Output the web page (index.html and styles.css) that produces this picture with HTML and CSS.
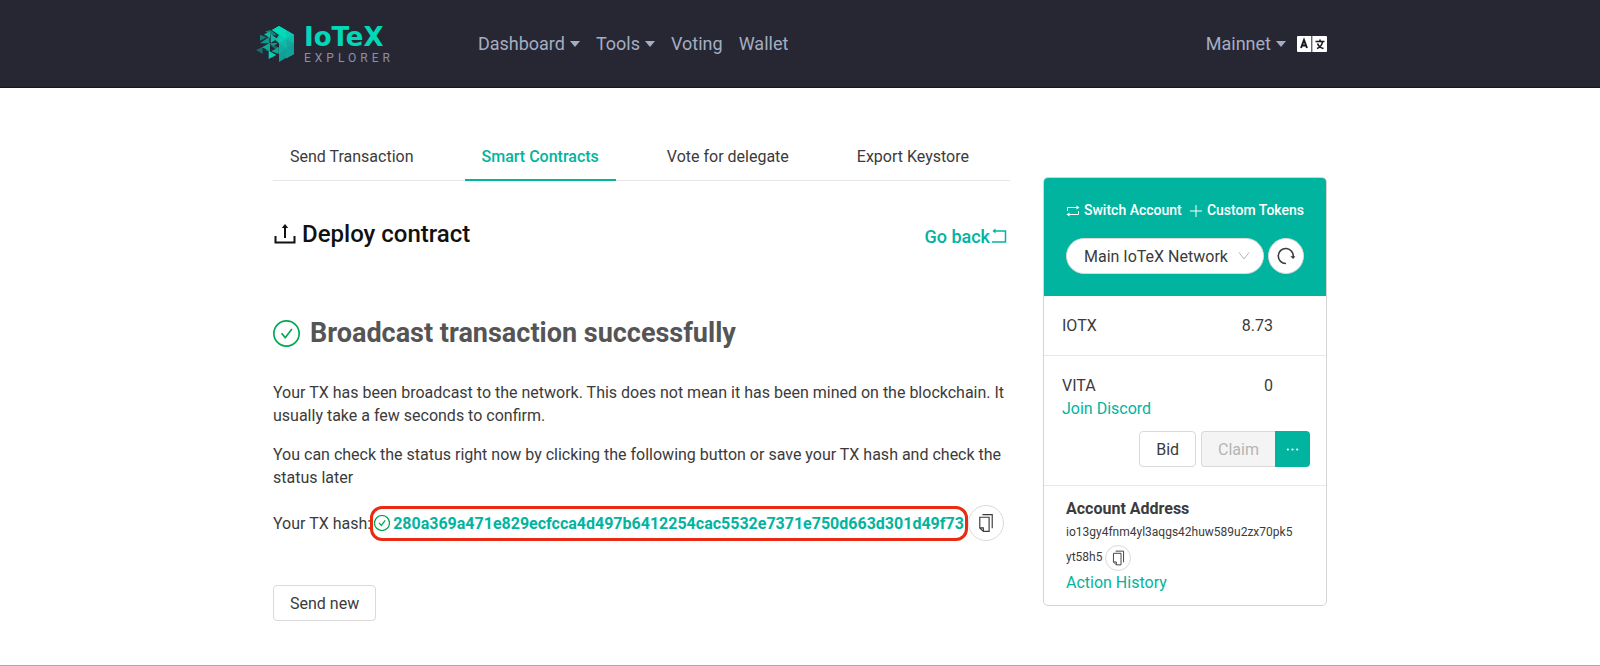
FILE: index.html
```html
<!DOCTYPE html>
<html lang="en">
<head>
<meta charset="utf-8">
<meta name="viewport" content="width=device-width, initial-scale=1">
<title>IoTeX Explorer - Deploy contract</title>
<link rel="stylesheet" href="styles.css">
</head>
<body>
<svg class="symbols" aria-hidden="true">
  <symbol id="check" viewBox="0 0 26 26"><circle cx="13" cy="13" r="12.2"/><path d="M8.2 12.8l3.6 4.2 6.4-8.4"/></symbol>
  <symbol id="copy" viewBox="0 0 18 22"><path d="M2 4.500h10.500v16H6L2 16.500zM2 16.500h4v4M5 1.500h11v15.500"/></symbol>
</svg>
<header class="header">
  <div class="header-inner">
    <a class="brand" href="#" aria-label="IoTeX Explorer">
      <svg class="brand-mark" viewBox="6 8 114 108" aria-hidden="true">
        <path fill="#0fc0ab" d="M75 8l45 26v58l-23 13-22-13V60L64 50l11-16-21-14z"/>
        <path fill="#00dcba" d="M75 8l22 13-22 13-21-14zM75 34l22-13v26z"/>
        <path fill="#06cdb2" d="M97 21l23 13-23 13zM75 34v26l22-13z"/>
        <path fill="#11aa9f" d="M97 47l23 13-23 13zM75 60l22 13-22 13z"/>
        <path fill="#0fb8a8" d="M120 34v26L97 47zM97 47v26L75 60z"/>
        <path fill="#149e98" d="M120 60v32L97 73zM97 73v32L75 90z"/>
        <path fill="#12a398" d="M97 73l23 19-23 13z"/>
        <path fill="#14827c" d="M34 24l16-4 20 16-22 0zM18 34l20 8-20 10z"/>
        <path fill="#09bda4" d="M30 33l18-8v20zM50 32l20 14-20 13z"/>
        <path fill="#12988b" d="M18 60l28-20v20zM48 60l24-2-16 14z"/>
        <path fill="#176b68" d="M6 80l20-10v22zM48 64l26 8v14zM42 68l6 16-14-2z"/>
        <path fill="#0cab97" d="M24 72l24-14v26zM52 84l22-12v20z"/>
        <path fill="#02d2b3" d="M44 82l23 13-23 12z"/>
        <path fill="#10a193" d="M75 90l20 14-20 12z"/>
      </svg>
      <span class="brand-text"><span class="brand-name">IoTeX</span><span class="brand-sub">EXPLORER</span></span>
    </a>
    <nav class="nav">
      <button class="nav-item" type="button">Dashboard<i class="caret"></i></button>
      <button class="nav-item" type="button">Tools<i class="caret"></i></button>
      <a class="nav-item" href="#">Voting</a>
      <a class="nav-item" href="#">Wallet</a>
    </nav>
    <div class="nav-end">
      <button class="nav-item" type="button">Mainnet<i class="caret"></i></button>
      <button class="language" type="button" aria-label="Language">
        <svg viewBox="0 0 30 16" aria-hidden="true">
          <rect width="30" height="16" rx="1" fill="#fff"/>
          <path d="M14.800 0v16" stroke="#262733"/>
          <path d="M4 12l3-8 3 8M5 9.500h4" fill="none" stroke="#161722" stroke-width="1.900"/>
          <path d="M18.500 5.500h9M23 3.500v2M20 12.500c3-1 5-3.500 5.500-7M20.500 7.500c1 2.500 3 4.500 6 5" fill="none" stroke="#161722" stroke-width="1.600"/>
        </svg>
      </button>
    </div>
  </div>
</header>

<div class="page">
  <main class="main">
    <nav class="tabs">
      <a class="tab" href="#">Send Transaction</a>
      <a class="tab tab-active" href="#" aria-current="page">Smart Contracts</a>
      <a class="tab" href="#">Vote for delegate</a>
      <a class="tab" href="#">Export Keystore</a>
    </nav>

    <div class="title-row">
      <h1 class="title">
        <svg class="upload-icon" viewBox="0 0 24 24" aria-hidden="true"><path d="M2.500 14v6.500h19V14M12 16V5"/><path class="solid" d="M8.800 6L12 2l3.200 4z"/></svg>
        Deploy contract
      </h1>
      <a class="back" href="#">Go back<svg class="back-icon" viewBox="0 0 18 18" aria-hidden="true"><path d="M4 4h11.500v11H2"/><path class="solid" d="M5.500 1.500v5L2.500 4z"/></svg></a>
    </div>

    <section class="result">
      <h2 class="result-title"><svg class="result-icon" aria-hidden="true"><use href="#check"/></svg>Broadcast transaction successfully</h2>
      <p class="text">Your TX has been broadcast to the network. This does not mean it has been mined on the blockchain. It usually take a few seconds to confirm.</p>
      <p class="text">You can check the status right now by clicking the following button or save your TX hash and check the status later</p>
      <div class="hash-row">
        <span>Your TX hash:</span>
        <a class="hash" href="#"><svg class="hash-icon" aria-hidden="true"><use href="#check"/></svg>280a369a471e829ecfcca4d497b6412254cac5532e7371e750d663d301d49f73</a>
        <button class="round" type="button" aria-label="Copy TX hash"><svg class="copy-icon"><use href="#copy"/></svg></button>
      </div>
      <button class="button" type="button">Send new</button>
    </section>
  </main>

  <aside class="card">
    <div class="card-head">
      <div class="card-links">
        <a class="card-link" href="#"><svg class="switch-icon" viewBox="0 0 14 14" aria-hidden="true"><path d="M1.500 7V3.500H12M12.500 7v3.500H2"/><path class="solid" d="M10.500 1.500v4l3-2zM3.500 8.500v4l-3-2z"/></svg>Switch Account</a>
        <a class="card-link" href="#"><svg class="plus-icon" viewBox="0 0 14 14" aria-hidden="true"><path d="M7 1v12M1 7h12"/></svg>Custom Tokens</a>
      </div>
      <div class="network">
        <label class="select-wrap">
          <select class="select" aria-label="Network"><option>Main IoTeX Network</option></select>
          <svg class="chevron" viewBox="0 0 12 8" aria-hidden="true"><path d="M1 .5l5 6.500L11 .5"/></svg>
        </label>
        <button class="round" type="button" aria-label="Reload"><svg class="reload-icon" viewBox="0 0 20 20" aria-hidden="true"><path d="M10 17.500A7.500 7.500 0 1 1 17.200 11"/><path class="solid" d="M14.300 10.300h5L17.200 13z"/></svg></button>
      </div>
    </div>
    <div class="balance"><span>IOTX</span><span>8.73</span></div>
    <div class="vita">
      <div class="vita-row"><span>VITA</span><span>0</span></div>
      <a class="link" href="#">Join Discord</a>
      <div class="actions">
        <button class="button" type="button">Bid</button>
        <div class="group">
          <button class="button claim" type="button" disabled>Claim</button>
          <button class="more" type="button" aria-label="More"><svg class="more-icon" viewBox="0 0 14 14" aria-hidden="true"><circle cx="2" cy="7" r="1.200"/><circle cx="7" cy="7" r="1.200"/><circle cx="12" cy="7" r="1.200"/></svg></button>
        </div>
      </div>
    </div>
    <div class="account">
      <h3 class="account-title">Account Address</h3>
      <div class="address">io13gy4fnm4yl3aqgs42huw589u2zx70pk5<wbr>yt58h5 <button class="round round-small" type="button" aria-label="Copy address"><svg class="copy-icon copy-small"><use href="#copy"/></svg></button></div>
      <a class="link" href="#">Action History</a>
    </div>
  </aside>
</div>
</body>
</html>
```
FILE: styles.css
```css
* { box-sizing: border-box; }

body {
  margin: 0;
  min-height: 100vh;
  border-bottom: 1px solid #a8a8a8;
  background: #fff;
  color: #3b3b3b;
  font: 16px/23px Roboto, "Liberation Sans", sans-serif;
}

a { color: inherit; text-decoration: none; }
button, select { font: inherit; color: inherit; cursor: pointer; }
h1, h2, h3, p { margin: 0; }
svg { display: block; flex: none; fill: none; stroke: currentColor; }
.solid { fill: currentColor; stroke: none; }
.symbols { display: none; }

/* Header */
.header { background: #262733; border-bottom: 1px solid #1b1030; }
.header-inner {
  display: flex;
  align-items: center;
  max-width: 1088px;
  height: 87px;
  margin: 0 auto;
  padding-right: 17px;
}
.brand { display: flex; align-items: center; gap: 10px; }
.brand-mark { width: 38px; height: 36px; stroke: none; }
.brand-text { display: flex; flex-direction: column; }
.brand-name { color: #00d8b8; font: bold 26px/28px "DejaVu Sans", sans-serif; }
.brand-sub { color: #8d8fa6; font-size: 12px; line-height: 14px; letter-spacing: 4px; }
.nav { display: flex; gap: 16px; margin-left: 84px; }
.nav-item {
  display: flex;
  align-items: center;
  gap: 5px;
  padding: 0;
  border: 0;
  background: none;
  color: #a5adc2;
  font-size: 18px;
  line-height: 24px;
}
.caret {
  border: solid transparent;
  border-width: 6px 5px 0;
  border-top-color: #a5adc2;
}
.nav-end { display: flex; align-items: center; gap: 11px; margin-left: auto; }
.language { padding: 0; border: 0; background: none; }
.language svg { width: 30px; height: 16px; stroke: none; }

/* Columns */
.page {
  display: flex;
  align-items: flex-start;
  gap: 33px;
  max-width: 1054px;
  margin: 0 auto;
}
.main { flex: 1; padding-top: 44px; }

/* Tabs */
.tabs { display: flex; gap: 34px; border-bottom: 1px solid #e6e6e6; }
.tab { margin-bottom: -1px; padding: 13px 17px 11px; border-bottom: 2px solid transparent; }
.tab-active { border-color: #00b4a0; color: #00b4a0; font-weight: 500; }

/* Title */
.title-row {
  display: flex;
  justify-content: space-between;
  align-items: center;
  padding: 36px 2px 0 0;
}
.title {
  display: flex;
  align-items: center;
  gap: 5px;
  color: #111;
  font-size: 24px;
  line-height: 34px;
  font-weight: 500;
}
.upload-icon { width: 24px; height: 24px; stroke-width: 2; }
.back { display: flex; align-items: center; padding-top: 4px; color: #00b4a0; font-size: 18px; font-weight: 500; }
.back-icon { width: 18px; height: 18px; stroke-width: 1.5; }

/* Result */
.result { padding-top: 64px; }
.result-title {
  display: flex;
  align-items: center;
  gap: 10px;
  margin-bottom: 30px;
  color: #555;
  font-size: 27px;
  line-height: 36px;
  font-weight: 700;
}
.result-icon { width: 27px; height: 27px; color: #00a854; stroke-width: 1.6; }
.text { margin-bottom: 16px; }
.hash-row { display: flex; align-items: center; margin-bottom: 44px; }
.hash {
  display: flex;
  align-items: center;
  gap: 3px;
  margin-left: -1px;
  padding: 4px 1px;
  border: 3px solid #ea2a13;
  border-radius: 12px;
  color: #00b4a0;
  font-weight: 700;
  line-height: 21px;
}
.hash-icon { width: 16px; height: 16px; color: #00a854; stroke-width: 2; }
.round {
  display: inline-flex;
  flex: none;
  align-items: center;
  justify-content: center;
  width: 36px;
  height: 36px;
  padding: 0;
  border: 1px solid #d9d9d9;
  border-radius: 50%;
  background: #fff;
}
.copy-icon { width: 16px; height: 20px; stroke-width: 1.3; }
.button {
  height: 36px;
  padding: 0 16px;
  border: 1px solid #d9d9d9;
  border-radius: 4px;
  background: #fff;
}

/* Account card */
.card {
  width: 284px;
  margin-top: 89px;
  overflow: hidden;
  border: 1px solid #d5d5d5;
  border-radius: 5px;
}
.card-head { padding: 21px 22px 22px; background: #00b4a0; }
.card-links { display: flex; justify-content: space-between; color: #fff; font-size: 14px; font-weight: 500; }
.card-link { display: flex; align-items: center; gap: 4px; white-space: nowrap; }
.switch-icon, .plus-icon { width: 14px; height: 14px; }
.network { display: flex; gap: 4px; padding-top: 16px; }
.select-wrap { position: relative; flex: 1; }
.select {
  width: 100%;
  height: 36px;
  padding: 0 17px;
  border: 1px solid #d9d9d9;
  border-radius: 18px;
  background: #fff;
  appearance: none;
}
.chevron { position: absolute; top: 14px; right: 14px; width: 12px; height: 8px; color: #b5b5b5; pointer-events: none; }
.reload-icon { width: 20px; height: 20px; stroke-width: 1.6; }
.balance, .vita-row { display: flex; justify-content: space-between; padding-right: 37px; }
.balance { padding: 18px 53px 18px 18px; border-bottom: 1px solid #e8e8e8; }
.vita { padding: 18px 16px 18px 18px; border-bottom: 1px solid #e8e8e8; }
.link { display: table; color: #00b4a0; }
.actions { display: flex; justify-content: flex-end; gap: 5px; padding-top: 11px; }
.group { display: flex; }
.claim { border-right: 0; border-radius: 4px 0 0 4px; background: #f4f4f4; color: #b5b5b5; cursor: default; }
.more {
  display: flex;
  align-items: center;
  justify-content: center;
  width: 35px;
  padding: 0;
  border: 0;
  border-radius: 0 4px 4px 0;
  background: #00b4a0;
  color: #fff;
}
.more-icon { width: 13px; height: 13px; fill: currentColor; stroke: none; }
.account { padding: 11px 22px; }
.account-title { font-size: 16px; font-weight: 700; line-height: 23px; }
.address { font-size: 12px; line-height: 25px; }
.round-small { width: 26px; height: 26px; vertical-align: middle; }
.copy-small { width: 13px; height: 16px; }
```
